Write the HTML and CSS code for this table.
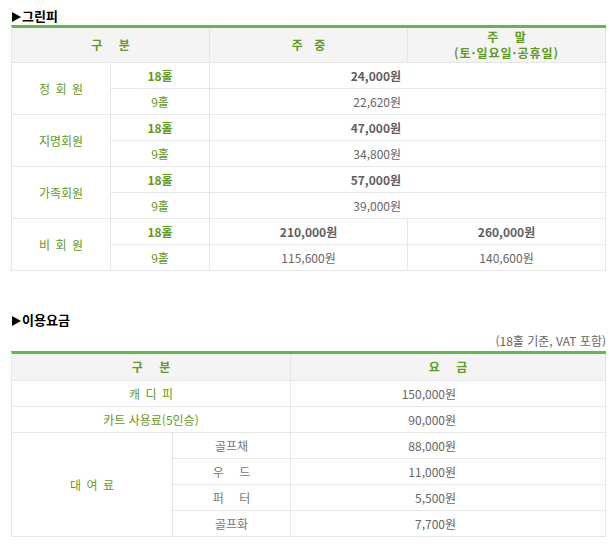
FILE: index.html
```html
<!DOCTYPE html>
<html lang="ko">
<head>
<meta charset="utf-8">
<title>그린피 / 이용요금</title>
<link rel="stylesheet" href="styles.css">
</head>
<body>
<div class="wrap">
  <h3 class="sec-title"><svg class="tri" width="9" height="10" viewBox="0 0 9 10"><polygon points="0,0 9,5 0,10" fill="#000"/></svg>그린피</h3>
  <table class="fee fee-green">
    <colgroup>
      <col class="c99"><col class="c99"><col class="c198"><col class="c198">
    </colgroup>
    <thead>
      <tr>
        <th colspan="2" class="wide">구 분</th>
        <th class="mid">주 중</th>
        <th><span class="wide">주 말</span><br><span class="sub">(토·일요일·공휴일)</span></th>
      </tr>
    </thead>
    <tbody>
      <tr>
        <td rowspan="2" class="lbl sp">정 회 원</td>
        <td class="hole b">18홀</td>
        <td colspan="2" class="price b right">24,000원</td>
      </tr>
      <tr>
        <td class="hole">9홀</td>
        <td colspan="2" class="price right">22,620원</td>
      </tr>
      <tr>
        <td rowspan="2" class="lbl">지명회원</td>
        <td class="hole b">18홀</td>
        <td colspan="2" class="price b right">47,000원</td>
      </tr>
      <tr>
        <td class="hole">9홀</td>
        <td colspan="2" class="price right">34,800원</td>
      </tr>
      <tr>
        <td rowspan="2" class="lbl">가족회원</td>
        <td class="hole b">18홀</td>
        <td colspan="2" class="price b right">57,000원</td>
      </tr>
      <tr>
        <td class="hole">9홀</td>
        <td colspan="2" class="price right">39,000원</td>
      </tr>
      <tr>
        <td rowspan="2" class="lbl sp">비 회 원</td>
        <td class="hole b">18홀</td>
        <td class="price b">210,000원</td>
        <td class="price b">260,000원</td>
      </tr>
      <tr>
        <td class="hole">9홀</td>
        <td class="price">115,600원</td>
        <td class="price">140,600원</td>
      </tr>
    </tbody>
  </table>

  <h3 class="sec-title sec2"><svg class="tri" width="9" height="10" viewBox="0 0 9 10"><polygon points="0,0 9,5 0,10" fill="#000"/></svg>이용요금</h3>
  <p class="note">(18홀 기준, VAT 포함)</p>
  <table class="fee fee-use">
    <colgroup>
      <col class="c161"><col class="c118"><col class="c315">
    </colgroup>
    <thead>
      <tr>
        <th colspan="2" class="wide">구 분</th>
        <th class="wide">요 금</th>
      </tr>
    </thead>
    <tbody>
      <tr>
        <td colspan="2" class="lbl sp">캐 디 피</td>
        <td class="price rt2">150,000원</td>
      </tr>
      <tr>
        <td colspan="2" class="lbl">카트 사용료(5인승)</td>
        <td class="price rt2">90,000원</td>
      </tr>
      <tr>
        <td rowspan="4" class="lbl sp">대 여 료</td>
        <td class="item">골프채</td>
        <td class="price rt2">88,000원</td>
      </tr>
      <tr>
        <td class="item wide2">우 드</td>
        <td class="price rt2">11,000원</td>
      </tr>
      <tr>
        <td class="item wide2">퍼 터</td>
        <td class="price rt2">5,500원</td>
      </tr>
      <tr>
        <td class="item">골프화</td>
        <td class="price rt2">7,700원</td>
      </tr>
    </tbody>
  </table>
</div>
</body>
</html>
```

FILE: styles.css
```css
html, body {
  margin: 0;
  padding: 0;
  background: #fff;
}
body {
  font-family: "Noto Sans CJK KR", "Noto Sans", sans-serif;
  font-size: 12px;
  color: #666;
}
.wrap {
  width: 595px;
  padding-left: 11px;
}
.sec-title {
  margin: 0;
  padding-top: 6px;
  height: 19px;
  line-height: 19px;
  font-size: 13px;
  font-weight: bold;
  color: #000;
}
.sec-title .tri {
  display: inline-block;
  vertical-align: -1px;
  margin-left: 1px;
  margin-right: 1px;
}
.sec2 {
  margin-top: 39px;
  padding-top: 0;
}
.note {
  margin: 4px 0 2px;
  line-height: 16px;
  height: 16px;
  text-align: right;
  color: #666;
  font-size: 12px;
}
.fee {
  width: 595px;
  table-layout: fixed;
  border-collapse: separate;
  border-spacing: 0;
  border-top: 3px solid #62b84a;
  border-left: 1px solid #e6e6e6;
}
.c99 { width: 99px; }
.c198 { width: 198px; }
.c161 { width: 161px; }
.c118 { width: 118px; }
.c315 { width: 315px; }
.fee th,
.fee td {
  padding: 0;
  border-right: 1px solid #e6e6e6;
  border-bottom: 1px solid #e6e6e6;
  text-align: center;
  vertical-align: middle;
  white-space: nowrap;
}
.fee th {
  background: #f4f4f4;
  color: #5f9a22;
  font-weight: bold;
}
.fee-green th {
  line-height: 16px;
  padding: 1px 0;
}
.fee-use th {
  line-height: 26px;
}
.fee td {
  line-height: 25px;
}
.wide { word-spacing: 13px; }
.mid { word-spacing: 8px; }
.sub { letter-spacing: 1px; }
.lbl { color: #5f9a22; }
.sp { word-spacing: 2px; }
.hole { color: #5f9a22; }
.b { font-weight: bold; }
.price { color: #666; }
.price.b { color: #5f5f5f; }
.right {
  text-align: right !important;
  padding-right: 204px !important;
}
.rt2 {
  text-align: right !important;
  padding-right: 149px !important;
}
.item { color: #777; }
.wide2 { word-spacing: 12px; }
```
